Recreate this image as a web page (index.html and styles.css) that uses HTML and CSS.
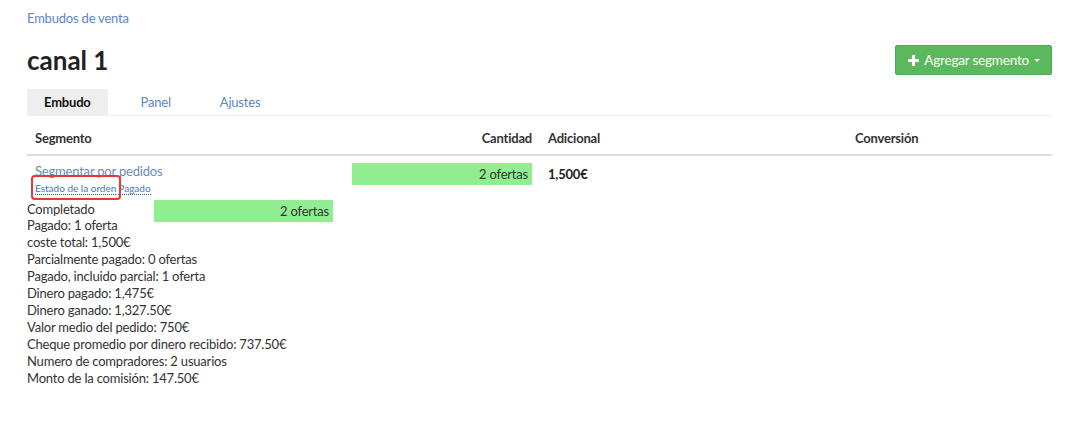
FILE: index.html
```html
<!DOCTYPE html>
<html lang="es">
<head>
  <meta charset="UTF-8">
  <title>canal 1</title>
  <link rel="stylesheet" href="styles.css">
</head>
<body>

  <div class="page">
    <!-- Breadcrumb -->
    <a class="crumb" href="#">Embudos de venta</a>

    <!-- Title + action -->
    <div class="head">
      <h1>canal 1</h1>
      <button class="btn-add">
        <svg width="11" height="11" viewBox="0 0 12 12"><path d="M4.3 0h3.4v4.3H12v3.4H7.7V12H4.3V7.7H0V4.3h4.3z" fill="#fff"/></svg>
        <span>Agregar segmento</span>
        <span class="caret"></span>
      </button>
    </div>

    <!-- Tabs -->
    <ul class="tabs">
      <li class="active">Embudo</li>
      <li>Panel</li>
      <li>Ajustes</li>
    </ul>

    <!-- Funnel table -->
    <table class="funnel">
      <thead>
        <tr>
          <th class="col-seg">Segmento</th>
          <th class="col-qty">Cantidad</th>
          <th class="col-add">Adicional</th>
          <th>Conversión</th>
        </tr>
      </thead>
      <tbody>
        <tr>
          <td class="col-seg">
            <a class="seg-link" href="#">Segmentar por pedidos</a>
            <div class="filters">
              <span class="filter">Estado de la orden</span><span class="filter">Pagado</span>
              <span class="mark"></span>
            </div>
          </td>
          <td class="col-qty"><div class="bar">2 ofertas</div></td>
          <td class="col-add"><b>1,500€</b></td>
          <td></td>
        </tr>
      </tbody>
    </table>

    <!-- Details -->
    <div class="details">
      <div class="status">
        <span class="status-label">Completado</span>
        <div class="bar">2 ofertas</div>
      </div>
      <div>Pagado: 1 oferta</div>
      <div>coste total: 1,500€</div>
      <div>Parcialmente pagado: 0 ofertas</div>
      <div>Pagado, incluido parcial: 1 oferta</div>
      <div>Dinero pagado: 1,475€</div>
      <div>Dinero ganado: 1,327.50€</div>
      <div>Valor medio del pedido: 750€</div>
      <div>Cheque promedio por dinero recibido: 737.50€</div>
      <div>Numero de compradores: 2 usuarios</div>
      <div>Monto de la comisión: 147.50€</div>
    </div>
  </div>

</body>
</html>
```

FILE: styles.css
```css
body {
  margin: 0;
  background: #fff;
  font-family: 'Lato', 'Open Sans', sans-serif;
  font-size: 13px;
  letter-spacing: -0.2px;
  color: #333;
}

.page {
  padding: 9px 27px 0 27px;
  width: 1025px;
}

.crumb {
  display: block;
  color: #5b87c5;
  text-decoration: none;
  font-size: 13px;
  line-height: 18px;
}

.head {
  display: flex;
  justify-content: space-between;
  align-items: center;
  margin-top: 18px;
}

h1 {
  margin: 0;
  font-size: 26px;
  font-weight: 700;
  letter-spacing: 0;
  color: #222;
  line-height: 30px;
}

.btn-add {
  display: flex;
  align-items: center;
  gap: 5px;
  height: 30px;
  padding: 0 11px 0 12px;
  background: #5cb85c;
  border: 1px solid #4cae4c;
  border-radius: 2px;
  color: #fff;
  font-family: inherit;
  font-size: 13.5px;
  letter-spacing: -0.2px;
  cursor: pointer;
}

.caret {
  width: 0;
  height: 0;
  border-left: 3px solid transparent;
  border-right: 3px solid transparent;
  border-top: 3px solid #fff;
}

.tabs {
  list-style: none;
  margin: 14px 0 0 0;
  padding: 0;
  display: flex;
  border-bottom: 1px solid #eee;
}

.tabs li {
  padding: 0 18px;
  height: 26px;
  line-height: 26px;
  color: #5b87c5;
  margin-right: 13px;
}

.tabs li.active {
  background: #eee;
  color: #111;
  font-weight: 700;
  padding: 0 17px;
  margin-right: 15px;
}

.funnel {
  width: 100%;
  border-collapse: collapse;
  margin-top: 7px;
}

.funnel th {
  text-align: left;
  font-weight: 700;
  color: #333;
  padding: 7px 8px 8px 8px;
  line-height: 16px;
  border-bottom: 2px solid #ddd;
}

.funnel td {
  padding: 7px 8px 0 8px;
  vertical-align: top;
}

.funnel .col-seg { width: 301px; }
.funnel .col-qty { width: 180px; text-align: right; }
.funnel .col-add { width: 291px; }

.seg-link {
  color: #6b8ac0;
  text-decoration: none;
  line-height: 16px;
}

.filters {
  position: relative;
  font-size: 10px;
  letter-spacing: 0;
  line-height: 14px;
  margin-top: 2px;
}

.filter {
  color: #4a77b4;
  border-bottom: 1px dotted #2a5a9a;
  margin-right: 2px;
}

.mark {
  position: absolute;
  left: -4px;
  top: -6px;
  width: 86px;
  height: 21px;
  border: 2px solid #e53935;
  border-radius: 4px;
}

.bar {
  background: #90ee90;
  height: 22px;
  line-height: 22px;
  padding-right: 4px;
  text-align: right;
  color: #333;
  box-sizing: border-box;
}

.funnel .bar { width: 180px; }

.col-add b {
  line-height: 22px;
  color: #222;
}

.details {
  margin-top: 6px;
  line-height: 17px;
}

.status {
  display: flex;
  align-items: flex-start;
  height: 16px;
}

.status-label {
  width: 127px;
}

.status .bar {
  width: 179px;
  margin-top: -1px;
}
```
